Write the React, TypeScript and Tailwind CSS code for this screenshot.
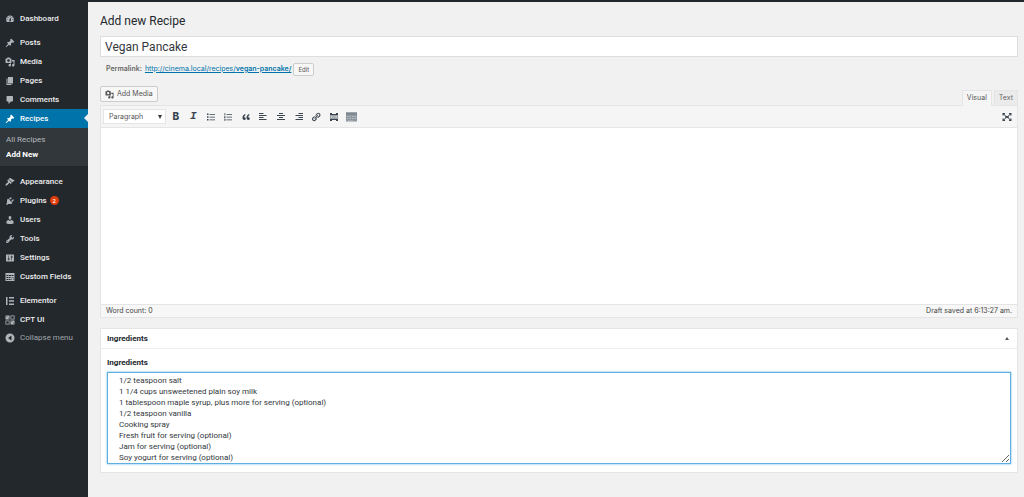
import { useState } from 'react';
import type { ReactNode } from 'react';

type MenuItem = { label: string; icon: ReactNode; badge?: number };

function Icon({ d, className = 'size-[10px]' }: { d: string; className?: string }) {
  return (
    <svg viewBox="0 0 20 20" fill="currentColor" fillRule="evenodd" aria-hidden="true" className={`shrink-0 ${className}`}>
      <path d={d} />
    </svg>
  );
}

const paths = {
  dashboard:
    'M3.76 16h12.48c1.1-1.37 1.76-3.11 1.76-5 0-4.42-3.58-8-8-8s-8 3.58-8 8c0 1.89.66 3.63 1.76 5zM10 4c.55 0 1 .45 1 1s-.45 1-1 1-1-.45-1-1 .45-1 1-1zM6 6c.55 0 1 .45 1 1s-.45 1-1 1-1-.45-1-1 .45-1 1-1zm8 0c.55 0 1 .45 1 1s-.45 1-1 1-1-.45-1-1 .45-1 1-1zm-5.37 5.55L12 7v6c0 1.1-.9 2-2 2s-2-.9-2-2c0-.57.24-1.08.63-1.45zM4 10c.55 0 1 .45 1 1s-.45 1-1 1-1-.45-1-1 .45-1 1-1zm12 0c.55 0 1 .45 1 1s-.45 1-1 1-1-.45-1-1 .45-1 1-1zm-5 3c0-.55-.45-1-1-1s-1 .45-1 1 .45 1 1 1 1-.45 1-1z',
  pin: 'M10.44 3.02l1.82-1.82 6.36 6.35-1.83 1.82c-1.05-.68-2.48-.57-3.41.36l-.75.75c-.92.93-1.04 2.35-.35 3.41l-1.83 1.82-2.41-2.41-2.8 2.79c-.42.42-3.38 2.71-3.8 2.29s1.86-3.39 2.28-3.81l2.79-2.79L4.1 9.36l1.83-1.82c1.05.69 2.48.57 3.4-.36l.75-.75c.93-.92 1.05-2.35.36-3.41z',
  media:
    'M13 11V4c0-.55-.45-1-1-1h-1.67L9 1H5L3.67 3H2c-.55 0-1 .45-1 1v7c0 .55.45 1 1 1h10c.55 0 1-.45 1-1zM7 4.5c1.38 0 2.5 1.12 2.5 2.5S8.38 9.5 7 9.5 4.5 8.38 4.5 7 5.62 4.5 7 4.5zM14 6h5v10.5c0 1.38-1.12 2.5-2.5 2.5S14 17.88 14 16.5s1.12-2.5 2.5-2.5c.17 0 .34.02.5.05V9h-3V6zm-4 8.05V13h2v3.5c0 1.38-1.12 2.5-2.5 2.5S7 17.88 7 16.5 8.12 14 9.5 14c.17 0 .34.02.5.05z',
  pages: 'M6 15V2h10v13H6zm-1 1h8v2H3V5h2v11z',
  comments: 'M5 2h9c1.1 0 2 .9 2 2v7c0 1.1-.9 2-2 2h-2l-5 5v-5H5c-1.1 0-2-.9-2-2V4c0-1.1.9-2 2-2z',
  appearance:
    'M14.48 11.06L7.41 3.99l1.5-1.5c.5-.56 2.3-.47 3.51.32 1.21.8 1.43 1.28 2.91 2.1 1.18.64 2.45 1.26 4.45.85zm-.71.71L6.7 4.7 4.93 6.47c-.39.39-.39 1.02 0 1.41l1.06 1.06c.39.39.39 1.03 0 1.42-.6.6-1.43 1.11-2.21 1.69-.35.26-.7.53-1.01.84C1.43 14.23.4 16.08 1.4 17.07c.99 1 2.84-.03 4.18-1.36.31-.31.58-.66.85-1.02.57-.78 1.08-1.61 1.69-2.21.39-.39 1.02-.39 1.41 0l1.06 1.06c.39.39 1.02.39 1.41 0z',
  plugins:
    'M13.11 4.36L9.87 7.6 8 5.73l3.24-3.24c.35-.34 1.05-.2 1.56.32.52.51.66 1.21.31 1.55zm-8 1.77l.91-1.12 9.01 9.01-1.19.84c-.71.71-2.63 1.16-3.82 1.16H6.14L4.9 17.26c-.59.59-1.54.59-2.12 0-.59-.58-.59-1.53 0-2.12l1.24-1.24v-3.88c0-1.13.4-3.19 1.09-3.89zm7.26 3.97l3.24-3.24c.34-.35 1.04-.21 1.55.31.52.51.66 1.21.31 1.55l-3.24 3.25z',
  users:
    'M10 9.25c-2.27 0-2.73-3.44-2.73-3.44C7 4.02 7.82 2 9.97 2c2.16 0 2.98 2.02 2.71 3.81 0 0-.41 3.44-2.68 3.44zm0 2.57L12.72 10c2.39 0 4.52 2.33 4.52 4.53v2.49s-3.65 1.13-7.24 1.13c-3.65 0-7.24-1.13-7.24-1.13v-2.49c0-2.25 1.94-4.48 4.47-4.48z',
  tools:
    'M16.68 9.77c-1.34 1.34-3.3 1.67-4.95.99l-5.41 6.52c-.99.99-2.59.99-3.58 0s-.99-2.59 0-3.57l6.52-5.42c-.68-1.65-.35-3.61.99-4.95 1.28-1.28 3.12-1.62 4.72-1.06l-2.89 2.89 2.82 2.82 2.86-2.87c.53 1.58.18 3.39-1.08 4.65zM3.81 16.21c.4.39 1.04.39 1.43 0 .4-.4.4-1.04 0-1.43-.39-.4-1.03-.4-1.43 0-.39.39-.39 1.03 0 1.43z',
  settings:
    'M18 16V4c0-.55-.45-1-1-1H3c-.55 0-1 .45-1 1v12c0 .55.45 1 1 1h14c.55 0 1-.45 1-1zM8 11h1c.55 0 1 .45 1 1s-.45 1-1 1H8v1.5c0 .28-.22.5-.5.5s-.5-.22-.5-.5V13H6c-.55 0-1-.45-1-1s.45-1 1-1h1V5.5c0-.28.22-.5.5-.5s.5.22.5.5V11zm5-2h-1c-.55 0-1-.45-1-1s.45-1 1-1h1V5.5c0-.28.22-.5.5-.5s.5.22.5.5V7h1c.55 0 1 .45 1 1s-.45 1-1 1h-1v5.5c0 .28-.22.5-.5.5s-.5-.22-.5-.5V9z',
  fields:
    'M1 2h18v16H1zM3 6v2h4V6zm5 0v2h4V6zm5 0v2h4V6zM3 10v2h4v-2zm5 0v2h3v-2zm-5 4v2h4v-2zm5 0v2h3v-2zm5-4v1h4v-1zm0 3v3h1v-3zm3 0v3h1v-3z',
  elementor: 'M2 2h3v16H2zM8 2h10v3H8zM8 8.5h10v3H8zM8 15h10v3H8z',
  cpt: 'M1 1h8v8H1zm2 1.5v1.5h1.5V2.5zm3 3V7h1.5V5.5zM11 1h8v8h-8zm1.5 1.5v5h5v-5zM1 11h8v8H1zm1.5 1.5v5h5v-5zM11 11h8v8h-8zm2 1.5V14h1.5v-1.5zm3 3V17h1.5v-1.5z',
  collapse: 'M10 1a9 9 0 1 0 0 18 9 9 0 0 0 0-18zm3 4v10l-7-5z',
  ul: 'M2 3h3v3H2zM7 4h11v1.5H7zM2 8.5h3v3H2zM7 9.25h11v1.5H7zM2 14h3v3H2zM7 15h11v1.5H7z',
  ol: 'M3 2h1.5v5H3zM7 4h11v1.5H7zM2 8.5h3v1L3.5 11H5v1H2v-1l1.5-1.5H2zM7 9.25h11v1.5H7zM2 13.5h3v4H2v-1h2v-.5H2.5v-1H4v-.5H2zM7 15h11v1.5H7z',
  quote:
    'M9.49 13.22c0-.74-.2-1.38-.61-1.9-.62-.78-1.83-.88-2.53-.72-.29-1.65 1.11-3.75 2.92-4.65L7.88 4c-2.73 1.3-5.42 4.28-4.96 8.05C3.21 14.43 4.59 16 6.54 16c.85 0 1.56-.25 2.12-.75s.83-1.18.83-2.03zm8.05 0c0-.74-.2-1.38-.61-1.9-.63-.78-1.83-.88-2.53-.72-.29-1.65 1.11-3.75 2.92-4.65L15.93 4c-2.73 1.3-5.41 4.28-4.95 8.05.29 2.38 1.66 3.95 3.61 3.95.85 0 1.56-.25 2.12-.75s.83-1.18.83-2.03z',
  left: 'M2 2h9v2H2zM2 6h15v2H2zM2 10h9v2H2zM2 14h15v2H2z',
  center: 'M6 2h8v2H6zM2 6h16v2H2zM6 10h8v2H6zM2 14h16v2H2z',
  right: 'M9 2h9v2H9zM3 6h15v2H3zM9 10h9v2H9zM3 14h15v2H3z',
  link: 'M17.74 2.76c1.68 1.69 1.68 4.41 0 6.1l-1.53 1.52c-1.12 1.12-2.7 1.47-4.14 1.09l2.62-2.61.76-.77.76-.76c.84-.84.84-2.2 0-3.04-.84-.85-2.2-.85-3.04 0l-.77.76-3.38 3.38c-.37-1.44-.02-3.02 1.1-4.14l1.52-1.53c1.69-1.68 4.42-1.68 6.1 0zM8.59 13.43l5.34-5.34c.42-.42.42-1.1 0-1.52-.44-.43-1.13-.39-1.53 0l-5.33 5.34c-.42.42-.42 1.1 0 1.52.44.43 1.13.39 1.52 0zm-.76 2.29l4.14-4.15c.38 1.44.03 3.02-1.09 4.14l-1.52 1.53c-1.69 1.68-4.41 1.68-6.1 0-1.68-1.68-1.68-4.42 0-6.1l1.53-1.52c1.12-1.12 2.7-1.47 4.14-1.1l-4.14 4.15c-.85.84-.85 2.2 0 3.05.84.84 2.2.84 3.04 0z',
  more: 'M2 2h16v5H2zM6 2v2h8V2zM2 9h3v2H2zm4.5 0h3v2h-3zm4 0h3v2h-3zm4.5 0h3v2h-3zM2 13h16v5H2zM6 16v2h8v-2z',
  expand:
    'M1 2h5v2.5H3.5V7H1zM14 2h5v5h-2.5V4.5H14zM1 13h2.5v2.5H6V18H1zM16.5 13H19v5h-5v-2.5h2.5zM6 8h8v4H6zM4.5 4.5l4 3.5-1 1-4-3.5zM15.5 4.5l1 1-4 3.5-1-1zM3.5 14.5l4-3.5 1 1-4 3.5zM12.5 11l4 3.5-1 1-4-3.5z',
};

const content: MenuItem[] = [
  { label: 'Posts', icon: <Icon d={paths.pin} /> },
  { label: 'Media', icon: <Icon d={paths.media} /> },
  { label: 'Pages', icon: <Icon d={paths.pages} /> },
  { label: 'Comments', icon: <Icon d={paths.comments} /> },
];

const admin: MenuItem[] = [
  { label: 'Appearance', icon: <Icon d={paths.appearance} /> },
  { label: 'Plugins', icon: <Icon d={paths.plugins} />, badge: 2 },
  { label: 'Users', icon: <Icon d={paths.users} /> },
  { label: 'Tools', icon: <Icon d={paths.tools} /> },
  { label: 'Settings', icon: <Icon d={paths.settings} /> },
  { label: 'Custom Fields', icon: <Icon d={paths.fields} /> },
];

const extra: MenuItem[] = [
  { label: 'Elementor', icon: <Icon d={paths.elementor} /> },
  { label: 'CPT UI', icon: <Icon d={paths.cpt} /> },
];

const tools = [
  { label: 'Bold', icon: <span className="text-[10px] font-extrabold">B</span> },
  { label: 'Italic', icon: <span className="font-['Liberation_Mono',monospace] text-[11px] font-bold italic">I</span> },
  { label: 'Bulleted list', icon: <Icon d={paths.ul} /> },
  { label: 'Numbered list', icon: <Icon d={paths.ol} /> },
  { label: 'Blockquote', icon: <Icon d={paths.quote} /> },
  { label: 'Align left', icon: <Icon d={paths.left} /> },
  { label: 'Align center', icon: <Icon d={paths.center} /> },
  { label: 'Align right', icon: <Icon d={paths.right} /> },
  { label: 'Insert link', icon: <Icon d={paths.link} /> },
  { label: 'Read more', icon: <Icon d={paths.more} /> },
  {
    label: 'Toolbar toggle',
    icon: (
      <svg viewBox="0 0 22 20" aria-hidden="true" className="h-[10px] w-[11px]">
        <path fill="#8d959d" d="M0 1h22v18H0z" />
        <path fill="#b9bfc4" d="M2 8h3v2H2zm5 0h3v2H7zm5 0h3v2h-3zm5 0h3v2h-3zM2 12h3v2H2zm5 0h3v2H7zm5 0h3v2h-3zm5 0h3v2h-3zM4 16h10v1H4z" />
        <path fill="#7a848d" d="M0 1h22v4H0z" />
      </svg>
    ),
  },
];

const recipe = [
  '1/2 teaspoon salt',
  '1 1/4 cups unsweetened plain soy milk',
  '1 tablespoon maple syrup, plus more for serving (optional)',
  '1/2 teaspoon vanilla',
  'Cooking spray',
  'Fresh fruit for serving (optional)',
  'Jam for serving (optional)',
  'Soy yogurt for serving (optional)',
].join('\n');

function MenuLink({ item }: { item: MenuItem }) {
  return (
    <a href="#" className="flex h-[19px] items-center gap-[5px] pl-[5px] font-medium text-[#eee]">
      <span className="text-[#b0b5ba]">{item.icon}</span>
      {item.label}
      {item.badge && (
        <span className="-ml-0.5 flex size-[9px] items-center justify-center rounded-full bg-[#e03c0a] text-[6px] text-white">
          {item.badge}
        </span>
      )}
    </a>
  );
}

function Sidebar() {
  return (
    <nav className="w-[88px] shrink-0 bg-[#23282d] pt-[7px] font-['Roboto',sans-serif] text-[8px]">
      <MenuLink item={{ label: 'Dashboard', icon: <Icon d={paths.dashboard} /> }} />
      <div className="mt-[5px]">
        {content.map((item) => (
          <MenuLink key={item.label} item={item} />
        ))}
        <a href="#" className="relative flex h-[19px] items-center gap-[5px] bg-[#0073aa] pl-[5px] font-medium text-white">
          <Icon d={paths.pin} />
          Recipes
          <span className="absolute right-0 top-[5px] border-y-4 border-r-4 border-y-transparent border-r-[#f1f1f1]" />
        </a>
        <div className="flex flex-col bg-[#32373c] pb-1 pl-[6px] pt-1 leading-[15px]">
          <a href="#" className="text-[#b4b9be]">All Recipes</a>
          <a href="#" className="font-bold text-white">Add New</a>
        </div>
      </div>
      <div className="mt-[6px]">
        {admin.map((item) => (
          <MenuLink key={item.label} item={item} />
        ))}
      </div>
      <div className="mt-[5px]">
        {extra.map((item) => (
          <MenuLink key={item.label} item={item} />
        ))}
      </div>
      <button type="button" className="flex h-[18px] items-center gap-[5px] pl-[5px] text-[#a0a5aa]">
        <Icon d={paths.collapse} className="size-[10px] text-[#b0b5ba]" />
        Collapse menu
      </button>
    </nav>
  );
}

function Editor() {
  return (
    <section className="mt-[10px]">
      <div className="flex items-end justify-between">
        <button
          type="button"
          className="mb-[3px] flex h-4 items-center gap-[3px] rounded-xs border border-[#ccc] bg-[#f7f7f7] px-1 text-[7px] text-[#555]"
        >
          <Icon d={paths.media} className="size-[9px]" />
          Add Media
        </button>
        <div className="flex gap-0.5 text-[7px] text-[#555]">
          <button type="button" className="relative -mb-px h-4 border border-b-0 border-[#e5e5e5] bg-[#f5f5f5] px-1">
            Visual
          </button>
          <button type="button" className="h-[15px] border border-b-0 border-[#e5e5e5] bg-[#ebebeb] px-1 text-[#666]">
            Text
          </button>
        </div>
      </div>
      <div className="border border-[#e5e5e5] bg-white">
        <div className="flex h-[22px] items-center border-b border-[#e5e5e5] bg-[#f5f5f5] pl-0.5 pr-[5px] text-[#3b4650]">
          <div className="relative mr-px w-[63px]">
            <select
              aria-label="Paragraph style"
              className="block h-[15px] w-full appearance-none border border-[#e5e5e5] bg-white pl-[5px] text-[7px] leading-[13px] text-[#555]"
            >
              <option>Paragraph</option>
            </select>
            <span className="pointer-events-none absolute right-[4px] top-[6px] border-x-2 border-t-4 border-x-transparent border-t-[#32373c]" />
          </div>
          <div className="grid w-[193px] grid-cols-11">
            {tools.map((tool) => (
              <button key={tool.label} type="button" aria-label={tool.label} className="flex h-4 items-center justify-center">
                {tool.icon}
              </button>
            ))}
          </div>
          <button type="button" aria-label="Fullscreen" className="ml-auto">
            <Icon d={paths.expand} />
          </button>
        </div>
        <textarea aria-label="Content" className="block h-[176px] w-full resize-none bg-white p-2 text-[8px] outline-none" />
        <div className="flex h-[13px] items-center justify-between border-t border-[#e5e5e5] bg-[#f7f7f7] px-[5px] text-[7px] text-[#444]">
          <span>Word count: 0</span>
          <span>Draft saved at 6:13:27 am.</span>
        </div>
      </div>
    </section>
  );
}

function Ingredients() {
  const [value, setValue] = useState(recipe);

  return (
    <section className="mt-[10px] border border-[#e5e5e5] bg-white px-[6px] pb-2 font-['Roboto',sans-serif] text-[8px] text-[#23282d]">
      <div className="-mx-[6px] flex h-5 items-center justify-between border-b border-[#eee] px-[6px]">
        <h2 className="font-bold">Ingredients</h2>
        <button type="button" aria-label="Toggle panel" className="px-0.5">
          <span className="block border-x-2 border-b-[3px] border-x-transparent border-b-[#555]" />
        </button>
      </div>
      <label htmlFor="ingredients" className="mb-1 mt-2 block font-bold leading-[11px]">
        Ingredients
      </label>
      <textarea
        id="ingredients"
        value={value}
        onChange={(e) => setValue(e.target.value)}
        className="block h-[92px] w-full resize-y overflow-hidden border border-[#5fb0e0] bg-white pl-[11px] pt-0.5 leading-[11px] text-[#32373c] shadow-[0_0_2px_#5fb0e0] outline-none"
      />
    </section>
  );
}

export default function App() {
  return (
    <div className="flex min-h-screen flex-col border-t-2 border-[#23282d] bg-[#f1f1f1] font-['Inter',sans-serif] leading-normal">
      <div className="flex grow">
        <Sidebar />
        <main className="min-w-0 grow pl-3 pr-[6px] pt-[11px]">
          <h1 className="font-['Roboto',sans-serif] text-[12px] leading-4 text-[#23282d]">Add new Recipe</h1>
          <input
            aria-label="Title"
            defaultValue="Vegan Pancake"
            className="mt-[7px] block h-[21px] w-full border border-[#ddd] bg-white px-1 font-['Roboto',sans-serif] text-[12px] text-[#32373c] outline-none"
          />
          <div className="mt-[5px] flex h-[14px] items-center pl-[6px] text-[7px] text-[#666]">
            <span className="mr-[3px] font-semibold">Permalink:</span>
            <a href="#" className="text-[#0073aa] underline">
              http://cinema.local/recipes/<b className="font-semibold">vegan-pancake/</b>
            </a>
            <button type="button" className="ml-0.5 h-[13px] rounded-xs border border-[#ccc] bg-[#f7f7f7] px-1 text-[6px] text-[#555]">
              Edit
            </button>
          </div>
          <Editor />
          <Ingredients />
        </main>
      </div>
    </div>
  );
}
